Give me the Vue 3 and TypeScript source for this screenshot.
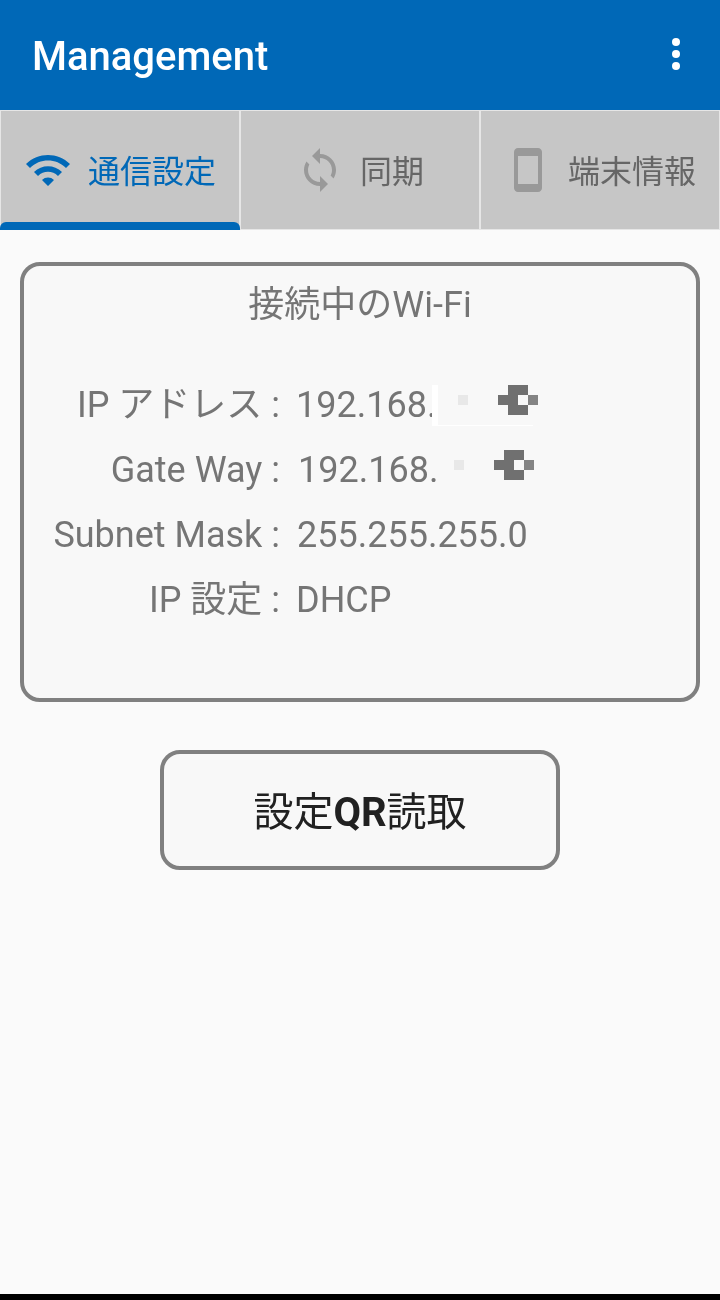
<script setup lang="ts">
interface Row { label: string; value: string; kind: string }
const rows: Row[] = [
  { label: 'IP アドレス :', value: '192.168.', kind: 'first' },
  { label: 'Gate Way :', value: '192.168.', kind: 'second' },
  { label: 'Subnet Mask :', value: '255.255.255.0', kind: 'subnet' },
  { label: 'IP 設定 :', value: 'DHCP', kind: 'plain' },
]
</script>

<template>
  <div class="screen">
    <header class="appbar">
      <h1 class="title">Management</h1>
      <div class="more"><i></i><i></i><i></i></div>
    </header>
    <nav class="tabs">
      <div class="tab active">
        <svg class="ico" width="48" height="48" viewBox="0 0 24 24"><path fill="currentColor" d="M1 9l2 2c4.97-4.97 13.03-4.97 18 0l2-2C16.93 2.93 7.08 2.93 1 9zm8 8l3 3 3-3c-1.65-1.66-4.34-1.66-6 0zm-4-4l2 2c2.76-2.76 7.24-2.76 10 0l2-2C15.14 9.14 8.87 9.14 5 13z"/></svg>
        <span>通信設定</span>
        <b class="indicator"></b>
      </div>
      <div class="tab">
        <svg class="ico dim" width="48" height="48" viewBox="0 0 24 24"><path fill="currentColor" d="M12 4V1L8 5l4 4V6c3.31 0 6 2.69 6 6 0 1.01-.25 1.97-.7 2.8l1.46 1.46C19.54 15.03 20 13.57 20 12c0-4.42-3.58-8-8-8zm0 14c-3.31 0-6-2.69-6-6 0-1.01.25-1.97.7-2.8L5.24 7.74C4.46 8.97 4 10.43 4 12c0 4.42 3.58 8 8 8v3l4-4-4-4v3z"/></svg>
        <span>同期</span>
      </div>
      <div class="tab">
        <svg class="ico dim" width="48" height="48" viewBox="0 0 24 24"><path fill="currentColor" d="M17 1.01L7 1c-1.1 0-2 .9-2 2v18c0 1.1.9 2 2 2h10c1.1 0 2-.9 2-2V3c0-1.1-.9-1.99-2-1.99zM17 19H7V5h10v14z"/></svg>
        <span>端末情報</span>
      </div>
    </nav>
    <main class="content">
      <section class="card">
        <h2 class="card-title">接続中のWi-Fi</h2>
        <div class="info">
          <template v-for="row in rows" :key="row.label">
            <div class="label">{{ row.label }}</div>
            <div class="value" :class="row.kind">
              {{ row.value }}
              <span v-if="row.kind === 'first' || row.kind === 'second'" class="mosaic">
                <i class="m-white"></i><i class="m-line"></i>
                <i class="m-light"></i>
                <i class="m-a"></i><i class="m-b"></i><i class="m-c"></i><i class="m-d"></i>
              </span>
            </div>
          </template>
        </div>
      </section>
      <button class="qr" type="button">設定<b>QR</b>読取</button>
    </main>
    <div class="navbar"></div>
  </div>
</template>

<style>
html, body { margin: 0; background: #fafafa; }
</style>

<style scoped>
.screen {
  width: 720px;
  height: 1300px;
  display: flex;
  flex-direction: column;
  background: #fafafa;
  font-family: Roboto, "Noto Sans CJK JP", sans-serif;
  overflow: hidden;
  will-change: transform;
}
.appbar {
  height: 110px;
  flex: none;
  box-sizing: border-box;
  background: #0068b7;
  display: flex;
  align-items: center;
  justify-content: space-between;
  padding: 2px 40px 0 32px;
}
.title {
  margin: 0;
  color: #fff;
  font-size: 40px;
  font-weight: 500;
}
.more { display: flex; flex-direction: column; gap: 4px; margin-top: -4px; }
.more i { width: 8px; height: 8px; border-radius: 50%; background: #fff; }
.tabs {
  height: 120px;
  flex: none;
  display: grid;
  grid-template-columns: repeat(3, 1fr);
}
.tab {
  position: relative;
  box-sizing: border-box;
  background: #c6c6c6;
  border: 1px solid #e6e6e6;
  display: flex;
  align-items: center;
  justify-content: center;
  gap: 16px;
  color: #666;
  font-size: 32px;
  line-height: 44px;
  padding-top: 3px;
}
.tab.active { color: #0068b7; }
.ico { flex: none; margin-top: -3px; }
.ico.dim { color: #999; }
.indicator {
  position: absolute;
  left: -1px;
  right: -1px;
  bottom: -1px;
  height: 8px;
  background: #0068b7;
  border-radius: 6px 6px 0 0;
}
.content {
  flex: 1;
  display: flex;
  flex-direction: column;
  align-items: center;
  padding: 32px 20px 0;
}
.card {
  width: 100%;
  height: 440px;
  box-sizing: border-box;
  border: 4px solid #808080;
  border-radius: 20px;
  background: #f8f8f8;
  color: #757575;
}
.card-title {
  margin: 0;
  padding-top: 16px;
  text-align: center;
  font-size: 36px;
  font-weight: 400;
  line-height: 46px;
}
.info {
  margin-top: 54px;
  display: grid;
  grid-template-columns: 256px 1fr;
  column-gap: 16px;
  grid-auto-rows: 65px;
  font-size: 36px;
  line-height: 46px;
}
.label { text-align: right; white-space: nowrap; }
.value { position: relative; white-space: nowrap; }
.value.second { padding-left: 2px; }
.value.subnet { padding-left: 1px; }
.mosaic {
  position: absolute;
  left: 0;
  top: 3px;
  width: 300px;
  height: 46px;
}
.second .mosaic { left: -4px; }
.mosaic i { position: absolute; background: #707070; }
.mosaic .m-white { left: 136px; top: 0; width: 6px; height: 40px; background: #fff; }
.mosaic .m-line { left: 136px; top: 40px; width: 101px; height: 1px; background: #fff; }
.second .m-white, .second .m-line { display: none; }
.mosaic .m-light { left: 162px; top: 10px; width: 10px; height: 10px; background: #e8e8e8; }
.mosaic .m-a { left: 212px; top: 0; width: 20px; height: 10px; }
.mosaic .m-b { left: 202px; top: 10px; width: 20px; height: 10px; }
.mosaic .m-c { left: 232px; top: 10px; width: 10px; height: 10px; background: #848484; }
.mosaic .m-d { left: 212px; top: 20px; width: 20px; height: 10px; }
.qr {
  margin-top: 48px;
  width: 400px;
  height: 120px;
  box-sizing: border-box;
  border: 4px solid #808080;
  border-radius: 20px;
  background: #f8f8f8;
  color: #212121;
  font-family: inherit;
  font-size: 40px;
  padding: 0 0 2px;
}
.qr b { font-weight: 700; }
.navbar { height: 6px; flex: none; background: #000; }
</style>
